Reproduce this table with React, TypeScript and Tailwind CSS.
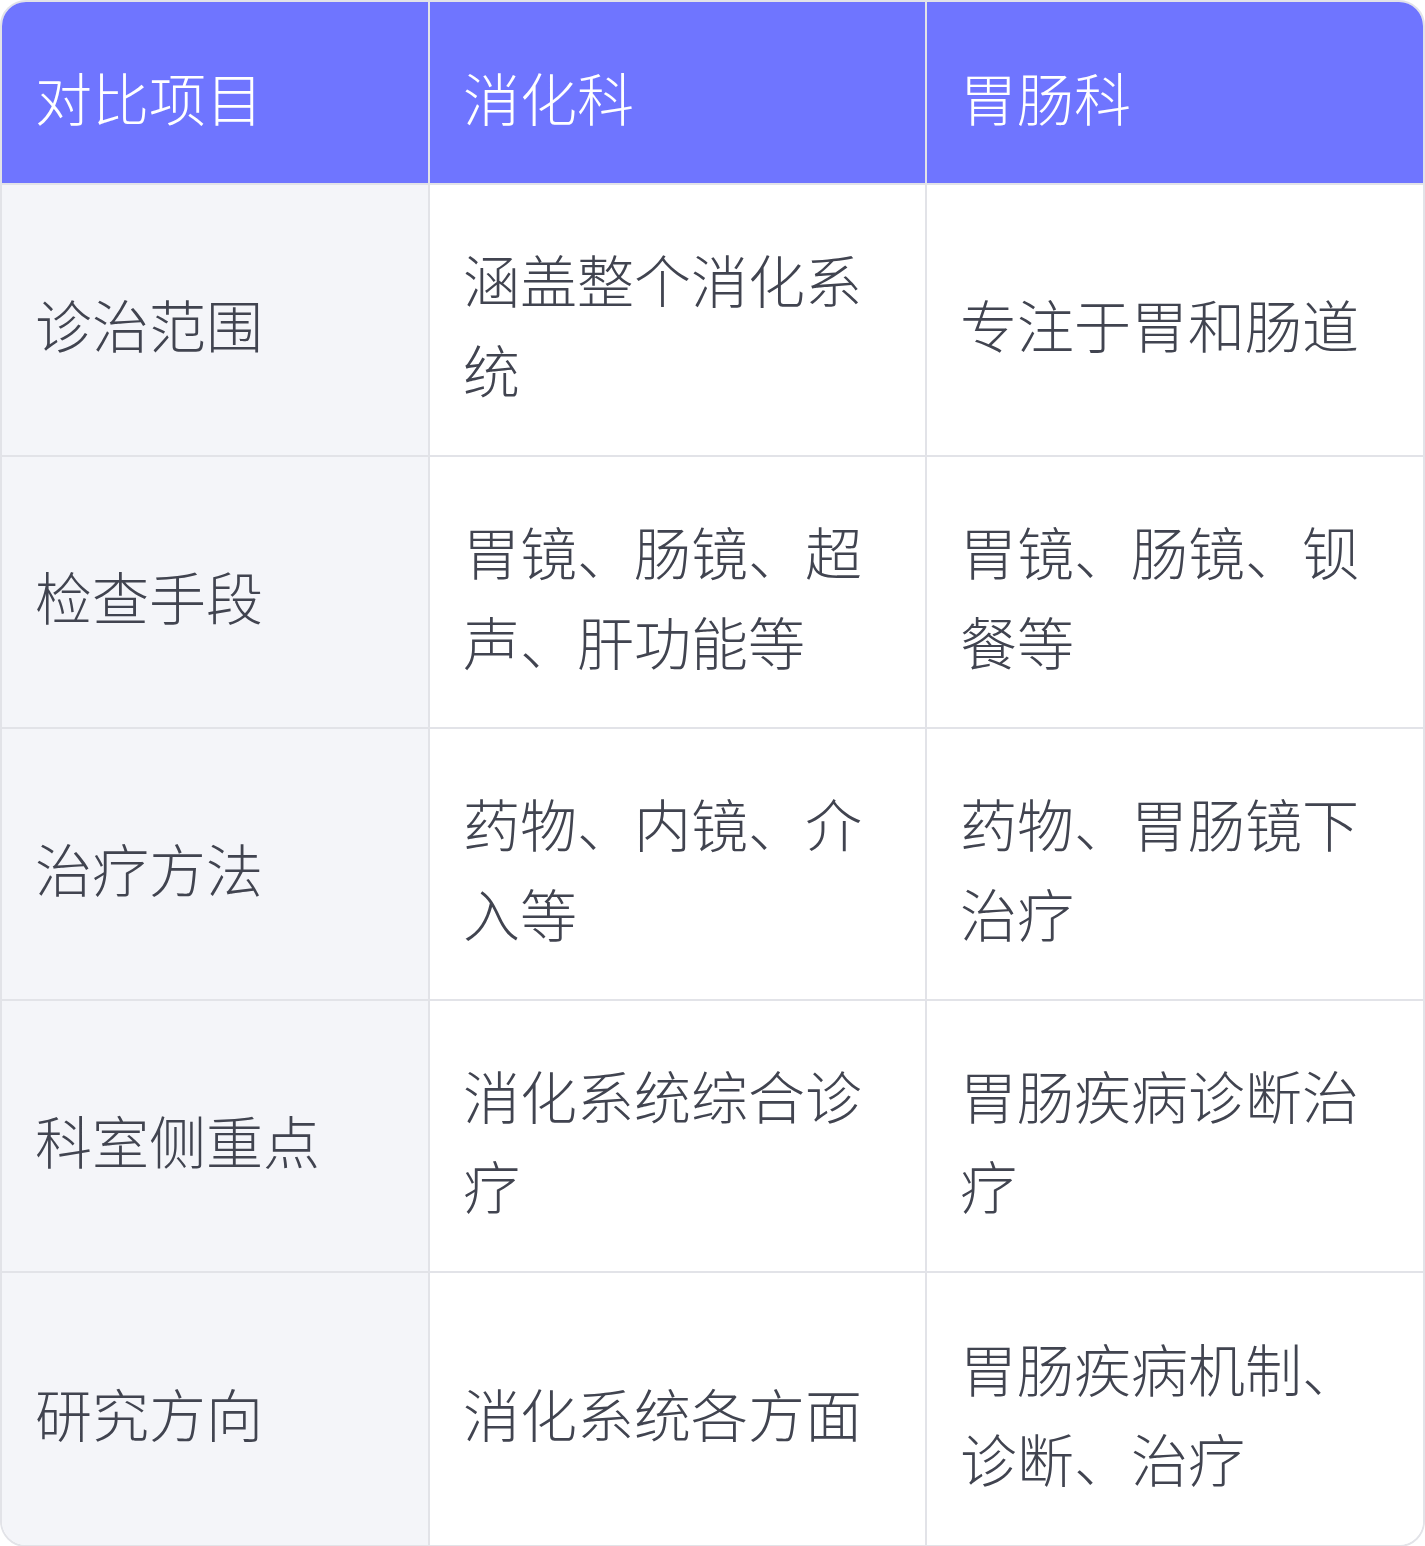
import React from "react";

const rows: [string, string, string][] = [
  ["诊治范围", "涵盖整个消化系统", "专注于胃和肠道"],
  ["检查手段", "胃镜、肠镜、超声、肝功能等", "胃镜、肠镜、钡餐等"],
  ["治疗方法", "药物、内镜、介入等", "药物、胃肠镜下治疗"],
  ["科室侧重点", "消化系统综合诊疗", "胃肠疾病诊断治疗"],
  ["研究方向", "消化系统各方面", "胃肠疾病机制、诊断、治疗"],
];

const font = { fontFamily: '"Noto Sans CJK SC", "Noto Sans", sans-serif' };

export default function App() {
  return (
    <div className="w-[1425px] bg-white" style={font}>
      <div className="overflow-hidden rounded-[26px] border-2 border-[#e2e3e8]">
        <div className="grid grid-cols-[428px_497px_1fr]">
          {["对比项目", "消化科", "胃肠科"].map((h, i) => (
            <div
              key={h}
              className={`flex h-[183px] items-center border-b-2 border-[#e2e3e8] bg-[#6f75ff] pt-[6px] pl-[33px] pr-[35px] text-[57px] font-light leading-[90px] text-white ${i < 2 ? "border-r-2" : ""}`}
            >
              {h}
            </div>
          ))}
          {rows.map((r, ri) =>
            r.map((c, ci) => (
              <div
                key={`${ri}-${ci}`}
                className={`flex h-[272px] items-center border-[#e2e3e8] pt-[6px] pl-[33px] pr-[35px] text-[57px] font-light leading-[90px] text-[#414450] ${ci < 2 ? "border-r-2" : ""} ${ri < rows.length - 1 ? "border-b-2" : ""} ${ci === 0 ? "bg-[#f4f5f9]" : "bg-white"}`}
              >
                <span>{c}</span>
              </div>
            ))
          )}
        </div>
      </div>
    </div>
  );
}
